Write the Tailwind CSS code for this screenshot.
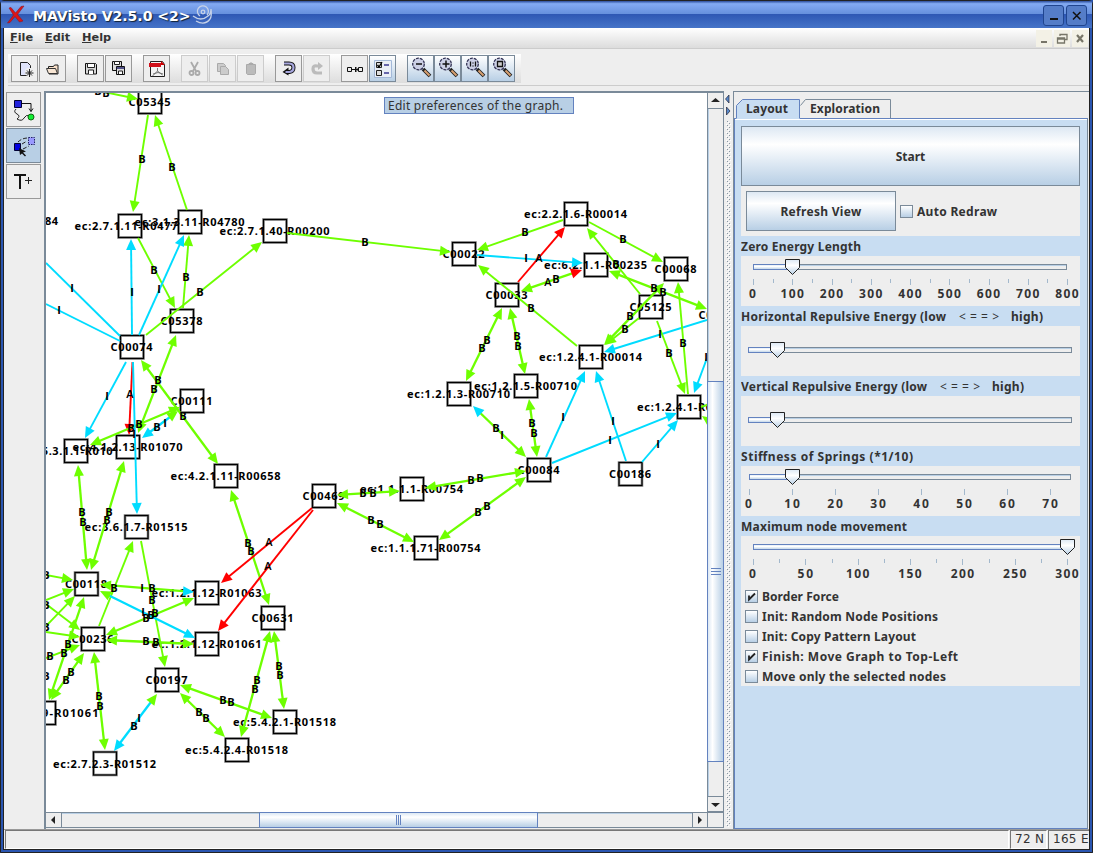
<!DOCTYPE html>
<html lang="en">
<head>
<meta charset="utf-8">
<title>MAVisto V2.5.0</title>
<script src="https://cdn.jsdelivr.net/npm/@tailwindcss/browser@4"></script>
</head>
<body class="w-[1093px] h-[853px] overflow-hidden bg-[#2a55b0] font-['Noto_Sans',sans-serif] text-[12px] font-bold text-[#333]">
<div class="w-[1093px] h-[853px] flex flex-col border border-[#222] bg-[#2a55b0] px-[2px] pb-[2px] rounded-t-[4px]">

  <!-- title bar -->
  <header class="-mx-[2px] h-[27px] shrink-0 flex items-center bg-linear-to-b from-[#2c4c9a] via-[#83aaf2] via-10% to-[#3f6cc0] pl-[6px] pr-[5px] relative">
    <div class="absolute inset-x-0 bottom-0 h-[14px] bg-linear-to-b from-[#2e57b4] to-[#4674c8]"></div>
    <svg class="relative" width="20" height="20" viewBox="0 0 20 20"><path d="M2 3L4 2.500L8.500 8L14 1.500L17 1L10.500 9.500L16 16L12.500 17L8 11.500L3 17.500L.5 18L6.500 10z" fill="#dd1515" stroke="#901525" stroke-width=".6"/></svg>
    <span class="relative ml-[6px] font-['DejaVu_Sans',sans-serif] text-[14px] leading-none text-white [text-shadow:1px_1px_1px_#123] whitespace-nowrap pt-[2px]">MAVisto V2.5.0 &lt;2&gt;</span>
    <svg class="relative ml-px" width="23" height="24" viewBox="0 0 23 24" fill="none" stroke="#c6d2e8" stroke-width="1.3"><circle cx="11" cy="9" r="1.800"/><path d="M8 13A5.500 5.500 0 1 1 15 12M1 13Q9 19 16 13Q19 11 19 6M4 18Q13 23 18 16Q20 13 19 6"/></svg>
    <div class="relative ml-auto flex gap-[2px] mt-[1px]">
      <div class="w-[21px] h-[21px] rounded-[3px] border border-[#20458f] bg-[#557dc8]"><svg width="19" height="19"><path d="M6 13h8" stroke="#111" stroke-width="2"/></svg></div>
      <div class="w-[21px] h-[21px] rounded-[3px] border border-[#20458f] bg-[#557dc8]"><svg width="19" height="19"><path d="M6 6l7.500 7.500M13.500 6L6 13.500" stroke="#111" stroke-width="1.500"/></svg></div>
    </div>
  </header>

  <div class="flex-1 min-h-0 flex flex-col bg-[#eee] border-x border-[#222] border-b">
    <!-- menu -->
    <nav class="h-[21px] shrink-0 flex items-center bg-linear-to-b from-white to-[#dcdcdc] border-b border-[#ccc] pl-[6px] font-['DejaVu_Sans',sans-serif] text-[11.3px] leading-none">
      <span class="w-[35px]"><u>F</u>ile</span><span class="w-[37px]"><u>E</u>dit</span><span><u>H</u>elp</span>
      <div class="ml-auto mr-[1px] flex gap-[2px]">
        <svg class="bg-[#f3f1e6]" width="16" height="17"><path d="M5 12h6" stroke="#777568" stroke-width="2"/></svg>
        <svg class="bg-[#f3f1e6]" width="16" height="17"><path d="M6 6V4.500h7v5h-2M3.500 8h7v5h-7zM3.500 9h7" fill="none" stroke="#777568" stroke-width="1.300"/></svg>
        <svg class="bg-[#f3f1e6]" width="16" height="17"><path d="M5 5l6 7M11 5l-6 7" stroke="#777568" stroke-width="2.200"/></svg>
      </div>
    </nav>

    <!-- tool bar -->
    <div class="h-[42px] shrink-0 pt-[5px] pl-[4px]">
      <div class="relative h-[32px] flex items-start pt-[1px] pl-[3px] border-b border-[#ccc]">
        <div class="absolute left-0 top-0 w-[513px] h-[29px] bg-linear-to-b from-white to-[#ddd]"></div>
        <div class="relative flex">
          <div class="flex gap-[1px]">
            <div class="w-[27px] h-[27px] bg-[#eee] border border-[#999]"><svg width="25" height="25" viewBox="0 0 25 25"><path d="M8.500 6.500h7l3 3v10h-10z" fill="#dfe3fa" stroke="#222"/><path d="M17 12v8M13 16h8M14 13l6 6M20 13l-6 6" stroke="#eee" stroke-width="3"/><path d="M17.500 13v8M13.500 17h8M15 14.500l5 5M20 14.500l-5 5" stroke="#222" stroke-width="1"/></svg></div>
            <div class="w-[27px] h-[27px] bg-[#eee] border border-[#999]"><svg width="25" height="25" viewBox="0 0 25 25"><path d="M8.500 12V10.500h5l1-1.500h3.500v9h-9" fill="#f8dfc8" stroke="#222"/><path d="M6.500 12.500h9l2 5h-9z" fill="#f8e6d4" stroke="#333"/></svg></div>
          </div>
          <div class="flex gap-[1px] ml-[11px]">
            <div class="w-[27px] h-[27px] bg-[#eee] border border-[#999]"><svg width="25" height="25" viewBox="0 0 25 25"><path d="M7.500 7.500h10l1 1v9.500h-11z" fill="#d7d7d7" stroke="#111"/><path d="M9.500 7.500h7v4h-7zM10.500 18v-4h5v4" fill="#fff" stroke="#222"/></svg></div>
            <div class="w-[27px] h-[27px] bg-[#eee] border border-[#999]"><svg width="25" height="25" viewBox="0 0 25 25"><path d="M6.500 5.500h9v9h-9z" fill="#ddd" stroke="#111"/><path d="M8.500 5.500h5v3h-5z" fill="#fff" stroke="#222"/><path d="M10.500 10.500h8v8h-8z" fill="#ddd" stroke="#111"/><path d="M10.500 12h8" stroke="#226" stroke-width="1.500"/><path d="M12.500 18v-3h4v3" fill="#fff" stroke="#222"/></svg></div>
          </div>
          <div class="ml-[11px] w-[27px] h-[27px] bg-[#eee] border border-[#999]"><svg width="25" height="25" viewBox="0 0 25 25"><path d="M6.500 5.500h12l2 3v12h-14z" fill="#f4f4f4" stroke="#222"/><path d="M5 7h12v4H5z" fill="#d0101a"/><path d="M17 5l4 4h-4z" fill="#c00"/><path d="M13.500 12v3l-5 5M13.500 15l5 4M9 18q5-3 10 0" fill="none" stroke="#777"/></svg></div>
          <div class="flex gap-[1px] ml-[11px]">
            <div class="w-[27px] h-[27px] bg-[#eee] border border-[#ccc]"><svg width="25" height="25" viewBox="0 0 25 25" fill="none" stroke="#aaa" stroke-width="1.800"><path d="M9 6l5 9M16 6l-5 9"/><circle cx="9.500" cy="17" r="2"/><circle cx="15.500" cy="17" r="2"/></svg></div>
            <div class="w-[27px] h-[27px] bg-[#eee] border border-[#ccc]"><svg width="25" height="25" viewBox="0 0 25 25" fill="#ccc" stroke="#aaa"><path d="M7.500 7.500h6l2 2v6h-8z"/><path d="M10.500 10.500h5l3 3v5h-8z"/></svg></div>
            <div class="w-[27px] h-[27px] bg-[#eee] border border-[#ccc]"><svg width="25" height="25" viewBox="0 0 25 25"><path d="M8.500 8.500h9v9l-1 1h-7l-1-1z" fill="#bbb" stroke="#aaa"/><path d="M10 9l1-2h1l1-1 1 1h1l1 2z" fill="#aaa"/></svg></div>
          </div>
          <div class="flex gap-[1px] ml-[11px]">
            <div class="w-[27px] h-[27px] bg-[#eee] border border-[#999]"><svg width="25" height="25" viewBox="0 0 25 25"><path d="M8 7.500h5q4.500 0 4.500 4t-4 4.500h-2" fill="none" stroke="#111" stroke-width="4"/><path d="M6.500 16l6-4.500v8z" fill="#111"/><path d="M8 7.500h5q4.500 0 4.500 4t-4 4.500h-4" fill="none" stroke="#a6a6dc" stroke-width="2.200"/></svg></div>
            <div class="w-[27px] h-[27px] bg-[#eee] border border-[#ccc]"><svg width="25" height="25" viewBox="0 0 25 25"><path d="M18 17h-5q-4 0-4-4t4-3h3" fill="none" stroke="#bbb" stroke-width="3.200"/><path d="M19 10l-5-4v8z" fill="#bbb"/></svg></div>
          </div>
          <div class="flex gap-[1px] ml-[11px]">
            <div class="w-[27px] h-[27px] bg-[#eee] border border-[#999]"><svg width="25" height="25" viewBox="0 0 25 25" fill="none" stroke="#111"><path d="M5.500 11.500h4v4h-4zM16.500 11.500h4v4h-4zM10 13.500h6M13.500 11v5l2.500-2.500z"/></svg></div>
            <div class="w-[27px] h-[27px] bg-linear-to-b from-white to-[#b8cfe5] border border-[#7a8a99]"><svg width="25" height="25" viewBox="0 0 25 25"><path d="M4.500 4.500h17v17h-17z" fill="#e9eef6" stroke="#a3b8d8"/><path d="M6.500 6.500h5v5h-5zM6.500 14.500h5v5h-5z" fill="#ddd" stroke="#222"/><path d="M7.500 9l1.500 2 3-5" stroke="#000" fill="none" stroke-width="1.300"/><path d="M14 9h5M14 17h5" stroke="#66a" stroke-width="2"/></svg></div>
          </div>
          <div class="flex ml-[11px]" id="zooms"></div>
        </div>
      </div>
    </div>

    <!-- work area -->
    <main class="flex-1 min-h-0 flex">
      <aside class="w-[40px] shrink-0 flex flex-col gap-[1px] pl-[2px] pt-[1px]">
        <div class="w-[35px] h-[35px] bg-[#eee] border border-[#999]"><svg width="33" height="33" viewBox="0 0 33 33"><path d="M7.500 7.500h7v7h-7z" fill="#22d" stroke="#003"/><path d="M15 10.500h9v8m-2-3l2 3 2-3" fill="none" stroke="#111"/><path d="M9 16q-3 3 1 5t0 5q5 3 7-1t6-2" fill="none" stroke="#222"/><circle cx="24" cy="24" r="3" fill="#1e3" stroke="#161"/></svg></div>
        <div class="w-[35px] h-[35px] bg-[#b8cfe5] border border-[#7a8a99]"><svg width="33" height="33" viewBox="0 0 33 33"><path d="M7.500 14.500h6v7h-6z" fill="#00d" stroke="#003"/><path d="M21.500 8.500h6v7h-6z" fill="#99f" stroke="#226" stroke-dasharray="1.500 1"/><path d="M11 13q4-4 10-4M15 15l5-3M16 20l6-3" fill="none" stroke="#222" stroke-dasharray="4 2"/><path d="M12 19l1 7 2-1.500 3 3 1-1-3-3 3-1z" fill="#111"/></svg></div>
        <div class="w-[35px] h-[35px] bg-[#eee] border border-[#999]"><svg width="33" height="33" viewBox="0 0 33 33"><path d="M7 10h12M13 10v14" stroke="#111" stroke-width="2"/><path d="M18 15.500h7M21.500 12v7" stroke="#222" stroke-width="1"/></svg></div>
      </aside>

      <!-- graph view -->
      <section class="relative w-[680px] shrink-0 h-[738px] flex flex-col border-l-2 border-t-2 border-[#7a8a99] bg-[#eee]">
        <div class="flex h-[719px] shrink-0">
          <svg id="graph" class="bg-white shrink-0" width="661" height="719" viewBox="46 93 661 719" font-family="Noto Sans, sans-serif" font-size="11" font-weight="700" fill="#000"></svg>
          <div class="w-[17px] shrink-0 flex flex-col border-x border-[#7a8a99]">
            <div class="h-[16px] border-b border-[#7a8a99]"><svg width="15" height="15"><path d="M3 9h9L7.500 5z" fill="#222"/></svg></div>
            <div class="h-[272px] border-l border-[#b8cfe5]"></div>
            <div class="h-[381px] -mx-[1px] border border-[#6382bf] bg-linear-to-r from-[#dce8f4] via-white via-30% to-[#b8cfe5] flex items-center justify-center"><svg width="10" height="9"><path d="M0 1.500h10M0 4.500h10M0 7.500h10" stroke="#6382bf"/></svg></div>
            <div class="flex-1 border-l border-[#b8cfe5]"></div>
            <div class="h-[16px] border-y border-[#7a8a99]"><svg width="15" height="14"><path d="M3 6h9L7.500 10z" fill="#222"/></svg></div>
          </div>
        </div>
        <div class="flex h-[16px] shrink-0 border-y border-[#7a8a99] w-[678px]">
          <div class="w-[16px] border-r border-[#7a8a99]"><svg width="15" height="14"><path d="M5 7l4-4v8z" fill="#222"/></svg></div>
          <div class="w-[197px] border-t border-[#b8cfe5]"></div>
          <div class="w-[279px] -my-[1px] border border-[#6382bf] bg-linear-to-b from-[#dce8f4] via-white via-30% to-[#b8cfe5] flex items-center justify-center"><svg width="7" height="10"><path d="M1.500 0v10M3.500 0v10M5.500 0v10" stroke="#6382bf"/></svg></div>
          <div class="flex-1 border-t border-[#b8cfe5]"></div>
          <div class="w-[16px] border-x border-[#7a8a99]"><svg width="14" height="14"><path d="M9 7l-4-4v8z" fill="#222"/></svg></div>
          <div class="w-[16px] border-r border-[#7a8a99]"></div>
        </div>
        <div class="absolute left-[338px] top-[4px] w-[190px] h-[17px] border border-[#6382bf] bg-[#b8cfe5] pl-[3px] font-normal leading-[15px] text-[12px] whitespace-nowrap tracking-[0.25px]">Edit preferences of the graph.</div>
      </section>

      <!-- divider -->
      <svg class="shrink-0" width="9" height="738" viewBox="0 0 9 738"><defs><pattern id="dots" width="4" height="4" patternUnits="userSpaceOnUse"><path d="M1 0h1v1h-1zM3 2h1v1h-1z" fill="#8a97a4"/><path d="M2 1h1v1h-1zM0 3h1v1h-1z" fill="#fff"/></pattern></defs><rect x="2" y="30" width="5" height="706" fill="url(#dots)"/><path d="M5 4v8L1.500 8z" fill="#58c" stroke="#223" stroke-width=".7"/><path d="M2.500 16v8l3.500-4z" fill="#58c" stroke="#223" stroke-width=".7"/></svg>

      <!-- settings -->
      <section class="flex-1 min-w-0 h-[738px] flex flex-col border-l border-t border-[#7a8a99] pt-[7px] pr-[1px]">
        <div class="flex h-[19px] shrink-0 pl-[2px]">
          <svg width="156" height="20" viewBox="0 0 156 20" class="relative z-10 block overflow-visible"><path d="M.5 20V6.500l6-6h57V20z" fill="#c8ddf2"/><path d="M.5 19V6.500l6-6h57V19" fill="none" stroke="#6382bf"/><path d="M64.500 6.500l5-6h85V19" fill="none" stroke="#7a8a99"/><text x="10" y="14" font-size="12" fill="#333" textLength="42">Layout</text><text x="74" y="14" font-size="12" fill="#333" textLength="70">Exploration</text></svg>
        </div>
        <div class="flex-1 min-h-0 border border-[#6382bf] border-r-[#7a8a99] bg-[#c8ddf2] pl-[6px] pr-[7px] pt-[7px] shadow-[inset_0_1px_0_white]">
          <div class="h-[60px] flex items-center justify-center border border-[#7a8a99] bg-linear-to-b from-[#dde8f3] via-white via-30% to-[#b8cfe5] pt-[1px]">Start</div>
          <div class="h-[50px] flex items-center bg-[#eee] pl-[5px]">
            <div class="w-[150px] h-[40px] flex items-center justify-center border border-[#7a8a99] bg-linear-to-b from-[#dde8f3] via-white via-30% to-[#b8cfe5] tracking-[0.3px] pt-[1px]">Refresh View</div>
            <div class="ml-[4px] w-[13px] h-[13px] border border-[#7a8a99] bg-linear-to-b from-white to-[#b8cfe5]"></div>
            <span class="ml-[4px] tracking-[0.3px] pt-[1px]">Auto Redraw</span>
          </div>
          <div id="sliders"></div>
          <div id="checks" class="bg-[#eee] h-[100px]"></div>
        </div>
      </section>
    </main>

    <!-- status bar -->
    <footer class="h-[20px] shrink-0 flex gap-[1px] border-t border-[#999] pl-[1px] text-[12px] leading-[17px] font-['DejaVu_Sans',sans-serif] text-[#333] font-normal">
      <div class="flex-1 border-l border-t border-[#777] border-r border-b border-r-white border-b-white"></div>
      <div class="w-[37px] border-l border-t border-[#777] border-r border-b border-r-white border-b-white pl-[4px] whitespace-nowrap overflow-hidden tracking-[0.3px]">72 N</div>
      <div class="w-[41px] border-l border-t border-[#777] pl-[4px] whitespace-nowrap overflow-hidden tracking-[0.3px]">165 E</div>
    </footer>
  </div>
</div>

<script>
// zoom buttons
const glyphs = ['<path d="M8 8h6" stroke="#111" stroke-width="1.500"/>','<path d="M7.500 8h7M11 4.500v7" stroke="#111" stroke-width="1.500"/>','<path d="M8.500 5.500v5M13.500 5.500v5M11 6.500v1M11 9.500v1" stroke="#111" stroke-width="1.300"/>','<path d="M8.500 5.500h5v5h-5z" fill="#ccc" stroke="#111" stroke-width="1.300"/>'];
document.getElementById('zooms').innerHTML = glyphs.map(g => `<div class="w-[27px] h-[27px] border border-[#7a8a99] bg-linear-to-b from-white to-[#b8cfe5]"><svg width="25" height="25" viewBox="0 0 25 25"><path d="M15 13l7 7" stroke="#222" stroke-width="3.800"/><path d="M16.500 14.500l5 5" stroke="#d8a070" stroke-width="2"/><circle cx="10.500" cy="8" r="5.800" fill="#ccd0e6" stroke="#335" stroke-width="1.300" stroke-dasharray="3 1"/>${g}</svg></div>`).join('');

// graph
const G='#6eff00', C='#00dcff', R='#ff0000';
const nodes = [[150,102,'C05345',42],[130,226,'ec:2.7.1.11-R04779',110],[190,222,'ec:3.1.3.11-R04780',110],[275,231,'ec:2.7.1.40-R00200',110],[182,321,'C05378',42],[132,347,'C00074',42],[192,401,'C00111',42],[76,451,'ec:5.3.1.1-R01015',102],[128,447,'ec:4.1.2.13-R01070',110],[226,476,'ec:4.2.1.11-R00658',110],[324,496,'C00469',42],[136.500,527,'ec:3.6.1.7-R01515',103],[86.500,584,'C00118',42],[93,639,'C00236',42],[207,593,'ec:1.2.1.12-R01063',110],[207,644,'ec:1.2.1.12-R01061',110],[273,618,'C00631',42],[167,680,'C00197',42],[285,722,'ec:5.4.2.1-R01518',103],[237,750,'ec:5.4.2.4-R01518',103],[105,763.500,'ec:2.7.2.3-R01512',103],[44,713,'ec:1.2.1.9-R01061',110],[464,254,'C00022',42],[576,214,'ec:2.2.1.6-R00014',103],[596,265,'ec:6.2.1.1-R00235',103],[676,269,'C00068',42],[507,295,'C00033',42],[651,307,'C05125',42],[591,357,'ec:1.2.4.1-R00014',103],[459,394,'ec:1.2.1.3-R00710',103],[526,386,'ec:1.2.1.5-R00710',103],[689,407,'ec:1.2.4.1-R01699',103],[539,470,'C00084',42],[630.500,474,'C00186',42],[412,489,'ec:1.1.1.1-R00754',103],[426,548,'ec:1.1.1.71-R00754',110],[720,315,'C00024',42],[5,221,'ec:4.1.1.32-R00084',107]];
// x1,y1,x2,y2, line colour, end head, start head
const edges = [
[148,115,133,212,G,G],[187,210,155,115,G,G],[104,92,138,99,G,G],[138,238,175,308,G,G],[183,308,189,235,G,G],[146,335,262,242,G,G],
[132,335,131,239,C,C],[139,335,184,235,C,C],[120,336,46,263,C],[120,341,46,304,C],[287,233,451,252,G,G],
[132.500,362,129,435,R,R],[126,362,85,438,C,C],[176,335,138,433,G,G,G],[141,360,218,464,G,G,G],[180,407,90,445,G,G,G],[178,411,142,438,C,C,G],[133,362,137,514,C,C],
[78,465,87,570,G,G,G],[124,461,91,570,G,G,G],[99,626,133,541,G,G],[141,541,165,667,G,G],[231,490,269,605,G,G,G],[312,508,221,583,R,R],[313,510,218,631,R,R],
[46,575,73,580,G,G],[46,600,74,589,G,G],[46,626,75,596,G,G],[84,597,49,700,G,G,G],[46,604,80,630,G,G],[46,632,80,637,G,G],[46,658,80,645,G,G],[84,653,51,700,G,G,G],
[194,592,100,584.500,G,G,C],[106,635,194,598,G,G,G],[106,640,194,644,G,G,G],[100,591,195,638,C,C,G],
[157,694,114,751,C,C,G],[180,685,272,718,G,G,G],[180,693,225,737,G,G,G],[270,631,241,737,G,G,G],[274,631,284,709,G,G,G],[94,652,105,750,G,G,G],
[563,220,477,250,G,G],[477,255,583,263,C,C],[518,282,565,227,R,R],[589,222,663,262,G,G],[577,346,478,265,G,G],[521,291,582,270,G,R,G],[640,294,587,228,G,G],[609,271,707,309,G,G,G],[604,345,664,283,G,G,G],[639,318,605,345,G,G],[707,320,604,352,C,C],[657,321,685,394,G,G],[688,394,678,282,G,G],[707,358,694,393,C,C],
[502,308,466,381,G,G,G],[510,308,525,374,G,G,G],[526,457,473,406,G,C,G],[529,399,537,457,G,G,G],[546,457,585,371,C,C],[552,463,677,413,C,C],[626,461,596,371,C,C],[642,462,678,420,C,C],[425,488,526,471,G,G,G],[439,540,526,477,G,G,G],[337,495,400,491,G,G,G],[337,503,414,542,G,G,G],[707,405,701,407,G],[709,421,702,416,G,G]];
const tags = 'B142,159 B172,167 B98,91 B106,93 B154,270 B186,277 B200,292 I132,292 I159,289 I72,288 I59,310 B365,242 I107,396 A130,394 I134,434 B158,380 B154,389 B183,416 B131,428 B139,424 B157,427 I165,423 B82,512 B83,522 B109,512 B107,520 B114,588 B152,600 B248,543 B251,551 A269,542 A268,566 I142,588 B152,588 I143,612 B146,618 B155,613 B151,615 B146,641 B156,642 I139,718 B134,726 B223,700 B231,702 B199,712 B206,718 B257,680 B255,689 B279,666 B280,675 B99,696 B100,706 B68,644 B64,653 B71,672 B66,680 B50,656 B46,575 B46,605 B46,627 B46,676 B525,232 I526,258 A539,258 B623,239 B531,308 A548,282 B556,279 B616,264 B654,288 B663,292 B630,316 B625,329 I660,334 B669,353 B683,343 I706,357 B487,340 B482,348 B517,336 B518,346 B496,428 I502,435 B532,423 B534,433 I563,417 I610,440 I613,421 I658,444 B471,480 B480,478 B478,512 B487,506 B363,493 B373,493 B371,520 B380,524'.split(' ');
const head=(x,y,dx,dy,c)=>`<path fill="${c}" d="M${x} ${y}L${x-11*dx-5*dy} ${y-11*dy+5*dx}L${x-11*dx+5*dy} ${y-11*dy-5*dx}z"/>`;
let s='';
for(const [x,y,t,w] of nodes) s+=`<rect x="${x-11.5}" y="${y-11.5}" width="23" height="23" fill="#fff" stroke="#888" stroke-width="2.6"/><rect x="${x-11.5}" y="${y-11.5}" width="23" height="23" fill="none" stroke="#000" stroke-width="1.2"/><text x="${x-w/2-.5}" y="${y+4}" textLength="${w}">${t}</text>`;
for(const [a,b,c,d,k,e,f] of edges){const l=Math.hypot(c-a,d-b),dx=(c-a)/l,dy=(d-b)/l,p=e?5:0,q=f?5:0;
 s+=`<path d="M${a+dx*q} ${b+dy*q}L${c-dx*p} ${d-dy*p}" stroke="${k}" stroke-width="${f?2.3:1.9}"/>`+(e?head(c,d,dx,dy,e):'')+(f?head(a,b,-dx,-dy,f):'');}
for(const t of tags){const [x,y]=t.slice(1).split(',').map(Number);s+=`<text x="${x}" y="${y+4}" text-anchor="middle" font-family="Open Sans, sans-serif" ${t[0]==='A'?'font-weight="600"':''}>${t[0]}</text>`;}
document.getElementById('graph').innerHTML=s;

// sliders: title, title width, track start/end, knob, major ticks, labels, minor ticks, track offset
const lin=(a,b,n)=>Array.from({length:n+1},(_,i)=>a+(b-a)*i/n);
const S=[['Zero Energy Length',120,12,326,51,lin(12,326,8),['0','100','200','300','400','500','600','700','800'],lin(12,326,16),10.500],
['Horizontal Repulsive Energy (low   <==>   high)',302,7,331,36,[],[],[],23.500],
['Vertical Repulsive Energy (low   <==>   high)',283,7,331,36,[],[],[],23.500],
['Stiffness of Springs (*1/10)',172,8,330,51,lin(8,309,7),['0','10','20','30','40','50','60','70'],[],10.500],
['Maximum node movement',166,12,326,326,lin(12,326,6),['0','50','100','150','200','250','300'],lin(12,326,12),10.500]];
document.getElementById('sliders').innerHTML='<svg class="block" width="339" height="350" font-family="Noto Sans, sans-serif" font-weight="700" font-size="12" fill="#333"><defs><linearGradient id="k" x2="0" y2="1"><stop stop-color="#dce8f4"/><stop offset=".4" stop-color="#fff"/><stop offset="1" stop-color="#b8cfe5"/></linearGradient></defs>'+S.map(([t,w,a,b,k,maj,lab,min,y],i)=>{
 const split=t.split('   '); const title=split.length>1?
  `<text x="0" y="15" textLength="${w-97}">${split[0]}</text><text x="${w-84}" y="15" font-weight="400" textLength="40">&lt;==&gt;</text><text x="${w-32}" y="15" textLength="32">${split[2]}</text>`:`<text x="0" y="15" textLength="${w}">${t}</text>`;
 return `<g transform="translate(0 ${i*70})">${title}<g transform="translate(0 20)"><rect width="339" height="50" fill="#eee"/><rect x="${a+.5}" y="${y-2}" width="${b-a-1}" height="5" fill="#eee" stroke="#7a8a99"/><path d="M${a+1} ${y-1}H${b-1}" stroke="#b8cfe5"/><rect x="${a+.5}" y="${y-2}" width="${k-a}" height="5" fill="url(#k)" stroke="#6382bf"/><path d="M${k-6.5} ${y-7}h14v8l-7 7-7-7z" fill="url(#k)" stroke="#222"/>`+
 min.map(x=>`<path d="M${Math.round(x)+.5} 23v4" stroke="#a3b8cc"/>`).join('')+maj.map((x,j)=>{const L=lab[j].length*7.8;return `<path d="M${Math.round(x)+.5} 23v6" stroke="#a3b8cc"/><text x="${x-L/2}" y="42" textLength="${L}">${lab[j]}</text>`}).join('')+'</g></g>';}).join('')+'</svg>';

// check boxes: label, checked, label width
const checks=[['Border Force',1,77],['Init: Random Node Positions',0,176],['Init: Copy Pattern Layout',0,154],['Finish: Move Graph to Top-Left',1,196],['Move only the selected nodes',0,184]];
document.getElementById('checks').innerHTML=checks.map(([t,c,w])=>`<div class="h-[20px] flex items-center pl-[4px] gap-[4px]"><div class="w-[13px] h-[13px] border border-[#7a8a99] bg-linear-to-b from-white to-[#b8cfe5]">${c?'<svg class="block" width="11" height="11"><path d="M3 4.500v4l6-6" fill="none" stroke="#222" stroke-width="1.800"/></svg>':''}</div><svg width="210" height="20" fill="#333"><text x="0" y="15" textLength="${w}">${t}</text></svg></div>`).join('');
</script>
</body>
</html>
